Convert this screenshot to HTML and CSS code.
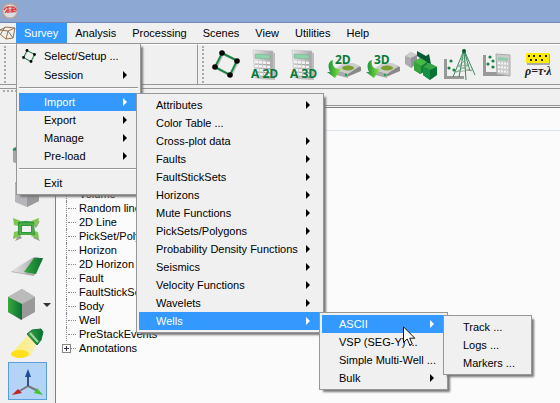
FILE: index.html
```html
<!DOCTYPE html>
<html lang="en">
<head>
<meta charset="utf-8">
<title>Survey</title>
<link rel="stylesheet" href="styles.css">
</head>
<body>
<svg class="defs" aria-hidden="true">
  <defs>
    <linearGradient id="metal" x1="0" x2="1"><stop offset="0" stop-color="#e6e6e6"/><stop offset="1" stop-color="#a6a6aa"/></linearGradient>
    <linearGradient id="leaf" x1="0" x2="1"><stop offset="0" stop-color="#118c3c"/><stop offset="1" stop-color="#8ee83c"/></linearGradient>
    <linearGradient id="deep" x1="0" x2="1"><stop offset="0" stop-color="#3aa83e"/><stop offset="1" stop-color="#087034"/></linearGradient>
    <linearGradient id="beam" x1="0" x2="1"><stop offset="0" stop-color="#ffee70"/><stop offset="1" stop-color="#f4efb0"/></linearGradient>
    <g id="square">
      <path d="M10 7 25 14.500 18 29 3 21Z" transform="translate(1 1)" fill="none" stroke="#bbb" stroke-width="2"/>
      <path d="M10 7 25 14.500 18 29 3 21Z" fill="none" stroke="#168747" stroke-width="2"/>
      <g fill="#050505"><circle cx="10" cy="7" r="2.800"/><circle cx="25" cy="15" r="2.800"/><circle cx="18" cy="29" r="2.800"/><circle cx="3" cy="21" r="2.800"/></g>
    </g>
    <g id="calculator">
      <path d="m5 5 19 2v27L7 33Z" fill="#bbb"/>
      <path d="m2 4 20 1v28L4 32Z" fill="url(#metal)" stroke="#c4c4c4" stroke-width=".6"/>
      <path d="m4 8 15 1v4L4 12Z" fill="#8fd4ad" stroke="#6aa584" stroke-width=".5"/>
      <path d="m4 16 16 1M4 20l16 1M5 24l15 1M5 28l15 1" stroke="#f4f4f4" stroke-width="2.500" stroke-dasharray="3 1"/>
      <path d="m4 18 16 1M4 22l16 1M5 26l15 1M5 30l15 1" stroke="#999" stroke-width=".7" stroke-dasharray="3 1"/>
    </g>
    <g id="drive">
      <path d="m7 25 11-7h10l7 3v4l-14 6-14-3Z" fill="#888"/>
      <path d="m7 24 11-7h9l7 3-12 8Z" fill="#ccc"/>
      <path d="m7 24 15 4v4L7 28Z" fill="#aaa"/>
      <ellipse cx="22" cy="22" rx="6" ry="2.500" fill="#79a02c"/>
      <circle cx="20" cy="29" r="1.300" fill="#13a94b"/>
      <path d="M7 14C3 15 1 19 4 26H1l8 6 6-9h-4C7 21 6 18 7 14Z" fill="url(#leaf)"/>
    </g>
    <g id="axis-dots">
      <path d="M1 11h3v17h17v3H1Z" fill="#999"/>
      <g fill="#16823f"><circle cx="8" cy="13" r="1.600"/><circle cx="6" cy="20" r="1.600"/><circle cx="11" cy="22" r="1.600"/></g>
    </g>
  </defs>
</svg>

<header class="titlebar">
  <svg class="app-icon" viewBox="0 0 16 16" aria-hidden="true"><rect width="16" height="16" rx="2" fill="#a3a3ae"/><circle cx="8" cy="8" r="7" fill="#ddd" stroke="#b9aeb0"/><path d="M2 7q2-4 6-3 5-1 6 3l-3-1v2l3 1M3 10l2-3h6v2H4M6 4v6m4-6v5" fill="none" stroke="#dc3c3c" stroke-width="1.200"/></svg>
</header>

<nav class="menubar">
  <svg class="menubar-icon" viewBox="0 0 16 20" aria-hidden="true"><path d="M0 7 6 4l9 1-2 10-7 1-6-5M0 7l8 1 7-3M8 8 6 16M8 8l5 7M0 12l5-8" fill="none" stroke="#98714c"/></svg>
  <div class="menubar-entry">
    <button class="menubar-button is-open" aria-haspopup="true">Survey</button>
    <ul class="menu menu-survey">
      <li class="item item-tall">
        <svg class="item-icon" viewBox="0 0 28 34" aria-hidden="true"><use href="#square"/></svg>
        <button class="item-button">Select/Setup ...</button>
      </li>
      <li class="item"><button class="item-button has-sub">Session</button></li>
      <li class="separator"></li>
      <li class="item">
        <button class="item-button has-sub is-active">Import</button>
        <ul class="menu menu-import">
          <li class="item"><button class="item-button has-sub">Attributes</button></li>
          <li class="item"><button class="item-button">Color Table ...</button></li>
          <li class="item"><button class="item-button has-sub">Cross-plot data</button></li>
          <li class="item"><button class="item-button has-sub">Faults</button></li>
          <li class="item"><button class="item-button has-sub">FaultStickSets</button></li>
          <li class="item"><button class="item-button has-sub">Horizons</button></li>
          <li class="item"><button class="item-button has-sub">Mute Functions</button></li>
          <li class="item"><button class="item-button has-sub">PickSets/Polygons</button></li>
          <li class="item"><button class="item-button has-sub">Probability Density Functions</button></li>
          <li class="item"><button class="item-button has-sub">Seismics</button></li>
          <li class="item"><button class="item-button has-sub">Velocity Functions</button></li>
          <li class="item"><button class="item-button has-sub">Wavelets</button></li>
          <li class="item">
            <button class="item-button has-sub is-active">Wells</button>
            <ul class="menu menu-wells">
              <li class="item">
                <button class="item-button has-sub is-active">ASCII</button>
                <ul class="menu menu-ascii">
                  <li class="item"><button class="item-button">Track ...</button></li>
                  <li class="item"><button class="item-button">Logs ...</button></li>
                  <li class="item"><button class="item-button">Markers ...</button></li>
                </ul>
                <svg class="cursor" viewBox="0 0 13 20" aria-hidden="true"><path d="M.5.800v15.700l3.700-3.500 2.600 6 2.500-1-2.600-5.800h5.100Z" fill="#fff" stroke="#111"/></svg>
              </li>
              <li class="item"><button class="item-button">VSP (SEG-Y) ...</button></li>
              <li class="item"><button class="item-button">Simple Multi-Well ...</button></li>
              <li class="item"><button class="item-button has-sub">Bulk</button></li>
            </ul>
          </li>
        </ul>
      </li>
      <li class="item"><button class="item-button has-sub">Export</button></li>
      <li class="item"><button class="item-button has-sub">Manage</button></li>
      <li class="item"><button class="item-button has-sub">Pre-load</button></li>
      <li class="separator"></li>
      <li class="item"><button class="item-button">Exit</button></li>
    </ul>
  </div>
  <button class="menubar-button">Analysis</button>
  <button class="menubar-button">Processing</button>
  <button class="menubar-button">Scenes</button>
  <button class="menubar-button">View</button>
  <button class="menubar-button">Utilities</button>
  <button class="menubar-button">Help</button>
</nav>

<div class="toolbars">
  <div class="toolbar toolbar-first"><span class="grip"></span></div>
  <div class="toolbar">
    <span class="grip"></span>
    <button class="tool" aria-label="Survey setup"><svg viewBox="-3 0 34 38"><use href="#square"/></svg></button>
    <button class="tool" aria-label="2D attributes"><svg viewBox="0 0 34 38"><use href="#calculator" x="3"/><text class="label-bold" x="3" y="32">A 2D</text></svg></button>
    <button class="tool" aria-label="3D attributes"><svg viewBox="0 0 34 38"><use href="#calculator" x="3"/><text class="label-bold" x="3" y="32">A 3D</text></svg></button>
    <button class="tool" aria-label="2D volume output"><svg viewBox="0 0 34 38"><use href="#drive"/><text class="label-bold" x="9" y="18">2D</text></svg></button>
    <button class="tool" aria-label="3D volume output"><svg viewBox="0 0 34 38"><use href="#drive"/><text class="label-bold" x="9" y="18">3D</text></svg></button>
    <button class="tool" aria-label="Volume builder"><svg viewBox="0 -1 34 38">
      <path d="m1 9 6-4 6 3v8l-6 5-6-4Z" fill="#aaaab0"/><path d="m1 9 6-4 6 3-6 3Z" fill="#ccc"/><path d="m7 11 6-3v8l-6 5Z" fill="#919198"/>
      <path d="m13 4 9 5 3-2 2 10-8-1 2-2-8-5Z" fill="#075b30"/>
      <path d="m10 15 6-4 7 4v9l-7 3-6-4Z" fill="#138137"/><path d="m10 15 6-4 7 4-6 4Z" fill="#48b846"/><path d="m10 15 7 4v8l-7-4Z" fill="#32a33d"/>
      <path d="m19 20 6-4 8 4v8l-7 5-7-5Z" fill="#087136"/><path d="m19 20 6-4 8 4-7 3Z" fill="#37a846"/><path d="m19 20 7 3v10l-7-5Z" fill="#159044"/>
    </svg></button>
    <button class="tool" aria-label="Well cross-plot"><svg viewBox="0 0 34 38"><use href="#axis-dots" y="2"/><path d="M21 4 10 31M21 4l11 25M21 4l2 30M21 4l-5 27M21 4l6 21" fill="none" stroke="#257e4a" stroke-width=".9"/><path d="m18 13 6-1m-9 8 11-1m-14 7 17-2M16 19l9-6m-12 13 13-7m-8-6 8 7m-11 0 14 5" fill="none" stroke="#67906f" stroke-width=".6"/><circle cx="21" cy="5" r="2" fill="#075d2b"/></svg></button>
    <button class="tool" aria-label="Attribute cross-plot"><svg viewBox="0 0 34 38"><path d="M1 9h3v17h23v4H1Z" fill="#999"/><g fill="#16823f"><circle cx="8" cy="11" r="1.600"/><circle cx="11" cy="15" r="1.600"/><circle cx="6" cy="18" r="1.600"/><circle cx="11" cy="21" r="1.600"/></g><path d="m14 8 14 1v21l-13-2Z" fill="#ccc" stroke="#aaa"/><path d="m16 11 10 1v3l-10-1Z" fill="#89cdaa"/><path d="m16 17 10 1M16 21l10 1M16 25l10 1" stroke="#f5f5f5" stroke-width="2" stroke-dasharray="2 1"/></svg></button>
    <button class="tool" aria-label="Rock physics"><svg viewBox="0 0 34 38"><path d="M6 8h23v11H6Z" fill="#aaa"/><path d="M5 7h23v10H5Z" fill="#ffed00"/><path d="M7 10h2m3 0h2m4 0h2m4 0h2M9 14h2m3 0h2m4 0h2" stroke="#222" stroke-width="2"/><text class="formula" x="4" y="29">ρ=τ·λ</text></svg></button>
  </div>
</div>

<main class="workspace">
  <aside class="sidebar">
    <span class="grip grip-flat"></span>
    <button class="side-tool" aria-label="Inline"><svg viewBox="0 0 38 38"><path d="M5 14 17 8l13 6v14l-13 5-12-5Z" fill="#a5a5aa"/><path d="m4 16 13-8 13 6-13 4Z" fill="#118b42"/></svg></button>
    <button class="side-tool" aria-label="Crossline"><svg viewBox="0 0 38 38"><path d="m7 11 12-6 12 6v18l-12 6-12-5Z" fill="#b5b5ba"/><path d="M19 16 31 11v18l-12 6Z" fill="#99999f"/><path d="m7 11 12-6 12 6-12 5Z" fill="#118b42"/></svg></button>
    <button class="side-tool" aria-label="View all"><svg viewBox="0 0 38 38"><path d="m6 10 7 3-3 4Zm25 0-7 3 3 4ZM6 30l7-3-3-4Zm25 0-7-3 3-4Z" transform="translate(1 1)" fill="#999"/><path d="m5 8 8 3-3 5-4-1Zm26 0-8 3 3 5 4-1ZM5 29l8-3-3-5-4 1Zm26 0-8-3 3-5 4 1Z" fill="#82c452"/><path d="M10 12q8-2 16 0l1 13H10Zm4 4v6h9v-6Z" fill="#2c993c" fill-rule="evenodd"/><path d="M12 14h13v10H12Z" fill="none" stroke="#6cba4b"/></svg></button>
    <button class="side-tool" aria-label="Section"><svg viewBox="0 0 38 38"><path d="m3 24 23-14 9 1-9 17Z" fill="#aaa"/><path d="m3 23 23-14h5L17 26Z" fill="url(#metal)"/><path d="M26 10h9l-7 16-12-2Z" fill="url(#deep)"/></svg></button>
    <div class="side-row">
      <button class="side-tool" aria-label="View side"><svg viewBox="0 0 38 38"><path d="m0 11 14-8 13 8v15l-14 8-13-8Z" fill="#999"/><path d="m0 11 14-8 13 8-13 7Z" fill="#bbb"/><path d="m0 11 14 7v16L0 26Z" fill="url(#deep)"/></svg></button>
      <button class="side-drop" aria-label="More views"></button>
    </div>
    <button class="side-tool" aria-label="Headlight"><svg viewBox="0 0 38 38"><path d="m4 29 16-18 9 9-7 12Z" fill="url(#beam)"/><ellipse cx="12" cy="30" rx="9" ry="4" fill="#ffdf19"/><path d="m19 10 5-4 9-1 2 3-2 8-4 5Z" fill="url(#deep)" stroke="#15733a"/><path d="m22 9 8 9" stroke="#a4d6a5" stroke-width="2"/></svg></button>
    <button class="side-tool is-pressed" aria-label="Show axes"><svg viewBox="1 1 36 36"><path d="m20 24-10 6M20 24l10 5" stroke="#777" stroke-width="2"/><path d="M20 24V13" stroke="#334f86" stroke-width="2"/><path d="m17 15 3-8 3 8Z" fill="#1b4d9b"/><path d="m4 33 6-6 4 4Z" fill="#c52425"/><path d="m35 33-9-2 3-5Z" fill="#43c33c"/></svg></button>
  </aside>
  <section class="dock">
    <div class="dock-title"></div>
    <div class="tree-pane">
      <div class="tree-header"></div>
      <ul class="tree">
        <li class="node">Volume</li>
        <li class="node">Random line</li>
        <li class="node">2D Line</li>
        <li class="node">PickSet/Polygon</li>
        <li class="node">Horizon</li>
        <li class="node">2D Horizon</li>
        <li class="node">Fault</li>
        <li class="node">FaultStickSet</li>
        <li class="node">Body</li>
        <li class="node">Well</li>
        <li class="node">PreStackEvents</li>
        <li class="node node-closed"><button class="expander" aria-label="Expand Annotations"></button>Annotations</li>
      </ul>
    </div>
  </section>
</main>
</body>
</html>
```
FILE: styles.css
```css
* { box-sizing: border-box; }

body {
  margin: 0;
  min-height: 100vh;
  display: flex;
  flex-direction: column;
  overflow: hidden;
  background: #f0f0f0;
  color: #000;
  font: 11px/14px "Liberation Sans", Arial, sans-serif;
}

button {
  margin: 0;
  padding: 0;
  border: 0;
  background: none;
  color: inherit;
  font: inherit;
}

ul { margin: 0; padding: 0; list-style: none; }
svg { display: block; }
.defs { position: absolute; width: 0; height: 0; }

/* Title bar */
.titlebar {
  height: 23px;
  padding: 3px 2px;
  background: #8ca8d3;
  border-bottom: 1px solid #7188b5;
}
.app-icon { width: 16px; height: 16px; }

/* Menu bar */
.menubar {
  position: relative;
  z-index: 10;
  display: flex;
  height: 20px;
}
.menubar-icon { width: 16px; height: 20px; }
.menubar-entry { position: relative; }
.menubar-button { height: 20px; padding: 0 8px; }
.is-open, .is-active { background: #3399ff; color: #fff; }
.is-open { padding-right: 9px; }

/* Popup menus */
.menu {
  position: absolute;
  top: 0;
  left: calc(100% - 2px);
  padding: 2px;
  border: 1px solid #979797;
  background: #f0f0f0;
  color: #000;
  box-shadow: 3px 3px 2px -1px #777;
}
.menu-survey { top: 100%; left: 0; width: 125px; }
.menu-import { width: 188px; }
.menu-wells { width: 129px; }
.menu-ascii { width: 89px; }

.item { position: relative; display: flex; height: 18px; }
.item-tall { height: 20px; }
.item-button {
  flex: 1;
  display: flex;
  align-items: center;
  justify-content: space-between;
  padding: 0 11px 0 17px;
  white-space: nowrap;
}
.menu-survey > .item > .item-button { padding-left: 25px; }
.has-sub::after {
  content: "";
  border: solid transparent;
  border-width: 4px 0 4px 4px;
  border-left-color: currentColor;
}
.item-icon { position: absolute; left: 3px; top: 1px; width: 14px; height: 17px; }
.separator {
  height: 9px;
  background: linear-gradient(#979797, #979797) 0 3px / 100% 1px no-repeat,
              linear-gradient(#fff, #fff) 0 4px / 100% 1px no-repeat;
}
.cursor { position: absolute; left: 81px; top: 11px; z-index: 1; width: 13px; height: 20px; }

/* Toolbars */
.toolbars {
  display: flex;
  height: 46px;
  padding-bottom: 3px;
  border-top: 1px solid #979797;
  border-bottom: 1px solid #979797;
}
.toolbar {
  flex: 1;
  display: flex;
  align-items: center;
  padding-left: 4px;
  border-top: 1px solid #fff;
  border-bottom: 1px solid #979797;
}
.toolbar-first { flex: 0 0 198px; border-right: 1px solid #979797; }
.grip { width: 2px; height: 37px; margin-right: 2px; border-left: 2px dotted #aaa; }
.tool { width: 39px; height: 38px; display: grid; place-items: center; }
.tool svg { width: 34px; height: 38px; overflow: visible; }
.label-bold { fill: #087b3a; font: bold 12px "Open Sans", sans-serif; }
.formula { fill: #222; font: italic bold 12px "Liberation Serif", serif; }

/* Work area */
.workspace { flex: 1; display: flex; }
.sidebar {
  flex: 0 0 55px;
  display: flex;
  flex-direction: column;
  align-items: flex-start;
  padding-left: 8px;
}
.grip-flat {
  width: 14px;
  height: 2px;
  margin: 1px 0 42px -5px;
  border-left: 0;
  border-top: 2px dotted #aaa;
}
.side-row { display: flex; align-items: center; }
.side-tool { width: 39px; height: 38px; }
.side-tool svg { width: 38px; height: 38px; }
.side-drop { border: solid transparent; border-width: 4px 4px 0; border-top-color: #333; margin-left: -4px; }
.is-pressed { border: 1px solid #5a9ee0; background: #b3d4f4; }
.is-pressed svg { width: 36px; height: 36px; }

.dock { flex: 1; display: flex; flex-direction: column; }
.dock-title { height: 17px; border-bottom: 1px solid #979797; }
.tree-pane {
  flex: 1;
  margin-top: 1px;
  border-top: 1px solid #808080;
  border-left: 1px solid #808080;
  background: #fbfbfb;
}
.tree-header { height: 23px; border-bottom: 1px solid #dbe5f2; }
.tree { padding: 56px 0 0 10px; }
.node {
  position: relative;
  height: 14px;
  padding-left: 12px;
  border-left: 1px dotted #888;
}
.node::before {
  content: "";
  position: absolute;
  left: 1px;
  top: 7px;
  width: 8px;
  border-top: 1px dotted #888;
}
.node-closed { border-left-color: transparent; }
.expander {
  position: absolute;
  left: -5px;
  top: 3px;
  width: 9px;
  height: 9px;
  border: 1px solid #888;
  background: linear-gradient(#335, #335) 50% 50% / 5px 1px no-repeat,
              linear-gradient(#335, #335) 50% 50% / 1px 5px no-repeat, #fff;
}
```
